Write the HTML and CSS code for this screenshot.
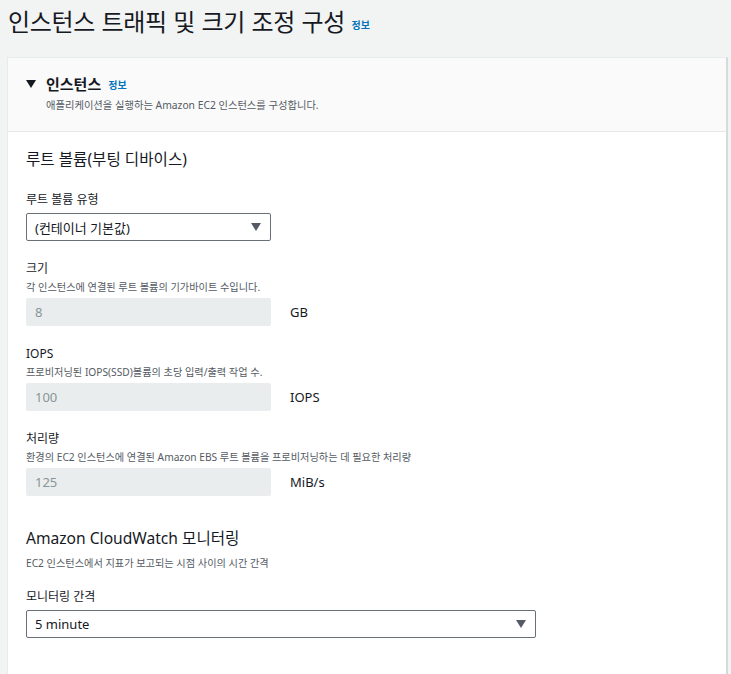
FILE: index.html
```html
<!DOCTYPE html>
<html lang="ko">
<head>
<meta charset="utf-8">
<link rel="stylesheet" href="styles.css">
</head>
<body>
<div class="page">
  <h1 class="title">인스턴스 트래픽 및 크기 조정 구성 <a class="info" href="#">정보</a></h1>
  <div class="panel">
    <div class="panel-header">
      <div class="ph-title">
        <span class="caret"></span>
        <span class="ph-text">인스턴스</span>
        <a class="info" href="#">정보</a>
      </div>
      <div class="ph-desc">애플리케이션을 실행하는 Amazon EC2 인스턴스를 구성합니다.</div>
    </div>
    <div class="panel-body">
      <h2 class="section">루트 볼륨(부팅 디바이스)</h2>

      <div class="field first">
        <div class="label">루트 볼륨 유형</div>
        <div class="select short"><span>(컨테이너 기본값)</span><span class="arrow"></span></div>
      </div>

      <div class="field">
        <div class="label">크기</div>
        <div class="hint">각 인스턴스에 연결된 루트 볼륨의 기가바이트 수입니다.</div>
        <div class="row"><div class="input">8</div><span class="unit">GB</span></div>
      </div>

      <div class="field">
        <div class="label">IOPS</div>
        <div class="hint">프로비저닝된 IOPS(SSD)볼륨의 초당 입력/출력 작업 수.</div>
        <div class="row"><div class="input">100</div><span class="unit">IOPS</span></div>
      </div>

      <div class="field">
        <div class="label">처리량</div>
        <div class="hint">환경의 EC2 인스턴스에 연결된 Amazon EBS 루트 볼륨을 프로비저닝하는 데 필요한 처리량</div>
        <div class="row"><div class="input">125</div><span class="unit">MiB/s</span></div>
      </div>

      <h2 class="section cw">Amazon CloudWatch 모니터링</h2>
      <div class="hint cw-hint">EC2 인스턴스에서 지표가 보고되는 시점 사이의 시간 간격</div>

      <div class="field mon">
        <div class="label">모니터링 간격</div>
        <div class="select wide"><span>5 minute</span><span class="arrow"></span></div>
      </div>
    </div>
  </div>
</div>
</body>
</html>
```

FILE: styles.css
```css
* { box-sizing: border-box; }
html, body { margin: 0; padding: 0; }
body {
  background: #f2f3f3;
  font-family: "Noto Sans", "Noto Sans CJK KR", sans-serif;
  color: #16191f;
  width: 731px;
  height: 674px;
  overflow: hidden;
}
.page { padding: 4px 3px 0 7px; }
.title {
  margin: 0 0 0 1px;
  font-family: "Noto Sans CJK KR", sans-serif;
  font-weight: 400;
  font-size: 24px;
  letter-spacing: -0.3px;
  line-height: 34px;
  height: 53px;
}
.info {
  color: #0073bb;
  font-size: 10px;
  font-weight: 700;
  letter-spacing: 0;
  text-decoration: none;
  font-family: "Noto Sans CJK KR", sans-serif;
  vertical-align: 2px;
}
.panel {
  background: #fff;
  border-left: 1px solid #e9ebeb;
  border-top: 1px solid #eaeded;
  border-right: 2px solid #d5dbdb;
  min-height: 640px;
}
.panel-header {
  background: #fafafa;
  border-bottom: 1px solid #e6e8e8;
  padding: 15px 0 0 18px;
  height: 74px;
}
.ph-title { display: flex; align-items: center; height: 20px; }
.caret {
  width: 0; height: 0;
  border-left: 5px solid transparent;
  border-right: 5px solid transparent;
  border-top: 8px solid #16191f;
  margin-right: 10px;
  margin-top: 1px;
}
.ph-text {
  font-family: "Noto Sans CJK KR", sans-serif;
  font-weight: 700;
  font-size: 15px;
  margin-right: 7px;
}
.ph-title .info { vertical-align: 0; margin-top: 2px; }
.ph-desc {
  margin: 4px 0 0 20px;
  font-size: 10.3px;
  color: #545b64;
  line-height: 16px;
}
.panel-body { padding: 16px 0 0 18px; }
.section {
  margin: 0;
  font-weight: 400;
  font-size: 15.6px;
  line-height: 22px;
  color: #16191f;
}
.field { margin-top: 19px; }
.field.first { margin-top: 21px; }
.label {
  font-size: 12px;
  line-height: 18px;
  color: #16191f;
}
.hint {
  font-size: 10.2px;
  line-height: 16px;
  color: #545b64;
  margin-top: 1px;
}
.row { display: flex; align-items: center; margin-top: 3px; }
.input {
  width: 245px;
  height: 28px;
  background: #eaeded;
  border-radius: 2px;
  color: #879596;
  font-size: 13px;
  line-height: 28px;
  padding-left: 9px;
}
.unit { margin-left: 19px; font-size: 13px; font-weight: 400; }
.select {
  display: flex;
  align-items: center;
  justify-content: space-between;
  height: 28px;
  border: 1px solid #687078;
  border-radius: 2px;
  background: #fff;
  font-size: 13px;
  padding: 0 9px 0 8px;
  margin-top: 4px;
}
.select.short { width: 245px; }
.select.wide { width: 510px; }
.arrow {
  width: 0; height: 0;
  border-left: 5px solid transparent;
  border-right: 5px solid transparent;
  border-top: 8px solid #545b64;
}
.section.cw { margin-top: 31px; }
.cw-hint { margin-top: 6px; }
.field.mon { margin-top: 17px; }
```
